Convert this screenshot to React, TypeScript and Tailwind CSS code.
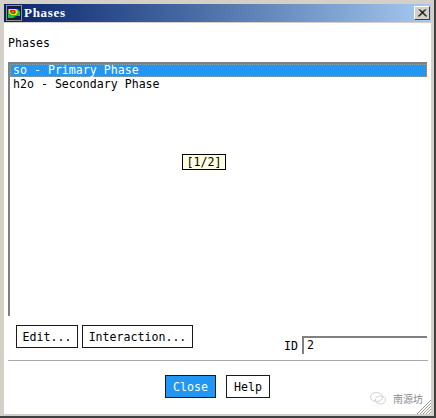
const mono = "font-['DejaVu_Sans_Mono',monospace] text-[11.6px] leading-[14px] text-black"

function DialogButton({ label, primary, className }: { label: string; primary?: boolean; className: string }) {
  return (
    <button
      className={`h-[23px] border border-[#1a1a1a] text-center ${mono} ${primary ? "bg-[#2196f3] !text-white" : "bg-white"} ${className}`}
    >
      {label}
    </button>
  )
}

function AppIcon() {
  return (
    <svg width="16" height="16" viewBox="0 0 16 16" className="shrink-0">
      <rect x="0.5" y="0.5" width="15" height="15" fill="#1c2026" stroke="#8a9098" />
      <rect x="2" y="3" width="12" height="10" fill="#0a1a8a" />
      <path d="M2 4h10l2 3v4h-4l-3 2H2z" fill="#12c838" />
      <path d="M3 4h7l2 3-2 3H6L3 8z" fill="#f6e81a" />
      <path d="M4 5h5l1 2-1 2H6L4 7z" fill="#ee2416" />
      <path d="M6 6h2v2H6z" fill="#12c838" />
    </svg>
  )
}

export default function App() {
  return (
    <div className="flex h-[418px] w-[436px] flex-col overflow-hidden border-b-2 border-r-2 border-[#404040] bg-[#d4d0c8] pb-[2px] pl-[4px] pr-[3px] pt-[4px]">
      {/* title bar */}
      <div className="flex h-[18px] shrink-0 items-center bg-gradient-to-r from-[#0a246a] to-[#a6caf0] pl-[2px] pr-[1px]">
        <AppIcon />
        <span className="ml-[2px] font-['Liberation_Serif',serif] text-[13px] font-bold leading-[14px] tracking-[0.7px] text-white">
          Phases
        </span>
        <div className="ml-auto flex h-[14px] w-[16px] items-center justify-center border border-b-[#404040] border-l-white border-r-[#404040] border-t-white bg-[#d4d0c8]">
          <svg width="9" height="8" viewBox="0 0 9 8">
            <path d="M1 0.5 8 7.5M2 0.5 9 7.5M8 0.5 1 7.5M7 0.5 0 7.5" stroke="#000" fill="none" />
          </svg>
        </div>
      </div>

      {/* body */}
      <div className="relative mt-px flex min-h-0 flex-1 flex-col bg-white pl-[4px] pr-[3px]">
        <div className={`mt-[13px] ${mono}`}>Phases</div>

        <div className="relative mt-[12px] h-[254px] w-[419px] shrink-0 border-l-2 border-t-2 border-l-[#808080] border-t-[#808080]">
          <div className="h-[13px] border border-dotted border-[#c9965a] bg-[#2196f3] pl-[2px] font-['DejaVu_Sans_Mono',monospace] text-[11.6px] leading-[11px] text-white">
            so - Primary Phase
          </div>
          <div className={`pl-[3px] ${mono}`}>h2o - Secondary Phase</div>
          <div className={`absolute left-[172px] top-[90px] flex h-[16px] w-[44px] items-center justify-center border border-black bg-[#ffffe1] ${mono}`}>
            [1/2]
          </div>
        </div>

        <div className="mt-[9px] flex h-[29px] shrink-0 items-start pl-[8px] pr-[1px]">
          <DialogButton label="Edit..." className="w-[62px]" />
          <DialogButton label="Interaction..." className="ml-[4px] w-[111px]" />
          <span className={`ml-auto mt-[14px] ${mono}`}>ID</span>
          <div className={`ml-[4px] mt-[11px] h-[18px] w-[125px] border-l-2 border-t-2 border-l-[#808080] border-t-[#808080] pl-[3px] ${mono}`}>
            2
          </div>
        </div>

        <div className="mt-[6px] h-px shrink-0 bg-[#a8a8a8]" />

        <div className="mt-[14px] flex shrink-0 items-start pl-[157px]">
          <DialogButton label="Close" primary className="w-[51px]" />
          <DialogButton label="Help" className="ml-[10px] w-[44px]" />
        </div>

        {/* watermark and size grip */}
        <div className="absolute bottom-[9px] right-[8px] flex items-center gap-[7px] text-[#8c8c8c]">
          <svg width="16" height="13" viewBox="0 0 16 13" fill="none" stroke="#d0d0d0">
            <ellipse cx="6.5" cy="5" rx="6" ry="4.5" />
            <ellipse cx="10.5" cy="8" rx="5" ry="4" />
          </svg>
          <span className="font-['Noto_Sans_CJK_SC',sans-serif] text-[10px] leading-[12px]">南源坊</span>
        </div>
        <svg width="15" height="14" viewBox="0 0 15 14" className="absolute bottom-0 right-0" stroke="#989898">
          <path d="M15 0 1 14M15 3 4 14M15 6 7 14M15 9 10 14M15 12 13 14" />
        </svg>
      </div>
    </div>
  )
}
